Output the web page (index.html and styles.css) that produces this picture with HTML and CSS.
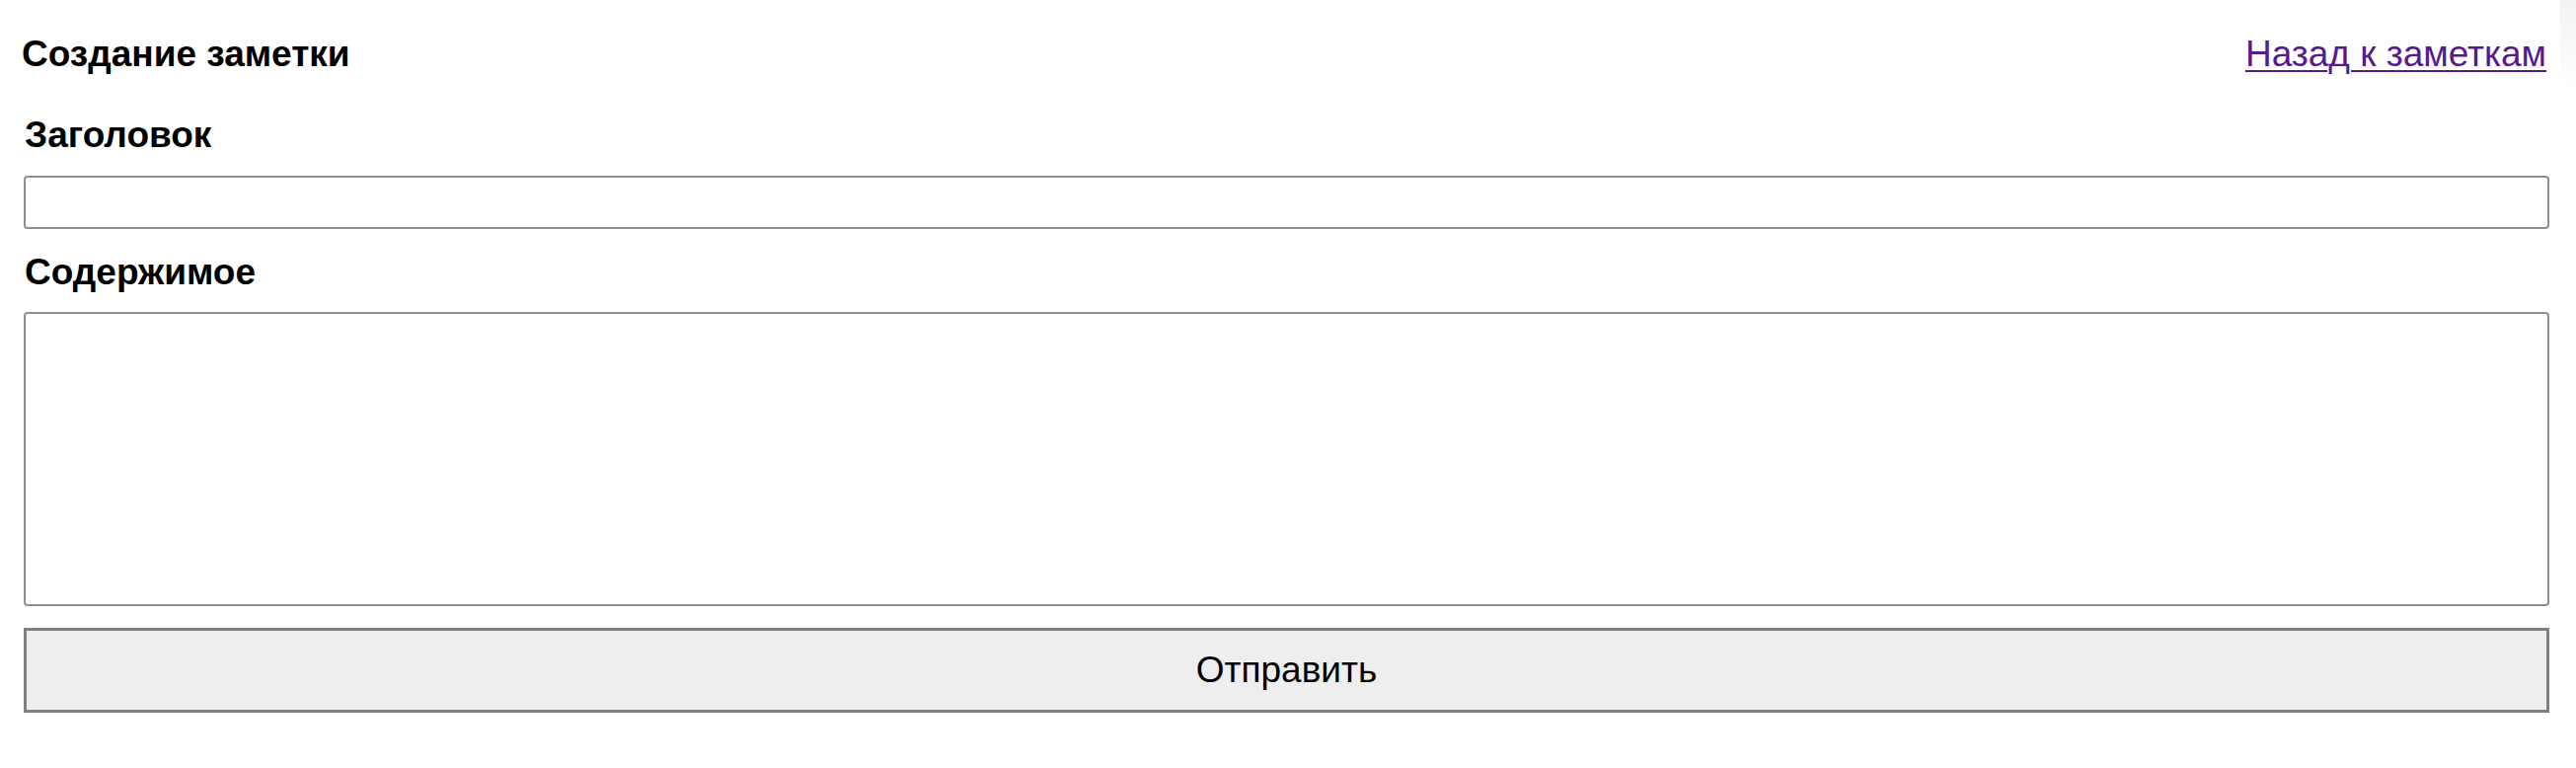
FILE: index.html
```html
<!DOCTYPE html>
<html lang="ru">
<head>
<meta charset="utf-8">
<title>Создание заметки</title>
<link rel="stylesheet" href="styles.css">
</head>
<body>
<div class="page">
  <header class="topbar">
    <h1 class="title">Создание заметки</h1>
    <a class="back" href="#">Назад к заметкам</a>
  </header>
  <form class="note-form">
    <label class="field-label field-label--first" for="title">Заголовок</label>
    <input class="field-input" id="title" type="text">
    <label class="field-label field-label--second" for="content">Содержимое</label>
    <textarea class="field-area" id="content"></textarea>
    <button class="submit" type="button">Отправить</button>
  </form>
</div>
<div class="edge-shade"></div>
</body>
</html>
```
FILE: styles.css
```css
html, body {
  margin: 0;
  padding: 0;
  background: #ffffff;
}
body {
  font-family: "Liberation Sans", Arial, sans-serif;
  color: #000;
}
.page {
  display: flex;
  flex-direction: column;
}
.topbar {
  display: flex;
  justify-content: space-between;
  align-items: center;
  height: 42px;
  padding: 34px 30px 0 22px;
}
.title {
  margin: 0;
  font-size: 37px;
  font-weight: bold;
  line-height: 42px;
}
.back {
  font-size: 37px;
  line-height: 42px;
  color: #551a8b;
  text-decoration: underline;
  text-decoration-thickness: 2px;
  text-underline-offset: 4px;
}
.note-form {
  display: flex;
  flex-direction: column;
  padding: 0 27px 0 24px;
}
.field-label {
  font-size: 37px;
  font-weight: bold;
  line-height: 34px;
  padding-left: 1px;
}
.field-label--first {
  margin-top: 44px;
  margin-bottom: 24px;
}
.field-label--second {
  margin-top: 27px;
  margin-bottom: 23px;
}
.field-input,
.field-area {
  box-sizing: border-box;
  margin: 0;
  width: 100%;
  border: 2px solid #8f8d9a;
  border-radius: 4px;
  background: #fff;
  font-family: inherit;
  font-size: 30px;
  outline: none;
}
.field-input {
  height: 54px;
}
.field-area {
  height: 298px;
  resize: none;
}
.submit {
  box-sizing: border-box;
  margin-top: 22px;
  height: 86px;
  width: 100%;
  border: 3px solid #808080;
  border-radius: 0;
  background: #eeeeee;
  font-family: "Liberation Sans", Arial, sans-serif;
  font-size: 37px;
  color: #000;
}
.edge-shade {
  position: absolute;
  top: 0;
  right: 0;
  width: 16px;
  height: 90px;
  background: linear-gradient(to bottom, rgba(0,0,0,0.05), rgba(0,0,0,0));
}
```
